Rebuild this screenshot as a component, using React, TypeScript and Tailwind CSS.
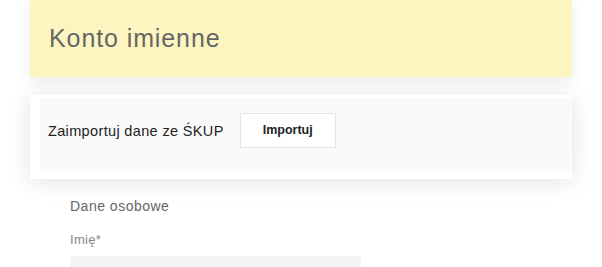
export default function App() {
  return (
    <div className="h-screen overflow-hidden bg-white font-['Liberation_Sans',Arial,sans-serif]">
      <div className="mx-[30px] flex h-[77px] items-center bg-[#fcf5c0] pl-[19px] shadow-[0_4px_14px_rgba(0,0,0,0.08)]">
        <h1 className="text-[25px] leading-none tracking-[0.9px] text-[#666]">Konto imienne</h1>
      </div>

      <div className="mx-[30px] mt-[18px] bg-white pb-[7px] pl-[10px] pt-[3px] shadow-[0_2px_22px_rgba(0,0,0,0.12)]">
        <div className="flex h-[74px] items-start gap-4 bg-[#fafafa] pl-2 pt-[15px]">
          <span className="mt-[8px] text-[14.5px] leading-5 tracking-[0.35px] text-[#222]">
            Zaimportuj dane ze ŚKUP
          </span>
          <button
            type="button"
            className="h-[35px] w-[96px] border border-[#e3e6ec] bg-white text-[12.5px] font-semibold text-[#222]"
          >
            Importuj
          </button>
        </div>
      </div>

      <section className="pl-[70px] pt-[17px]">
        <h2 className="text-[14px] leading-5 tracking-[0.5px] text-[#666]">Dane osobowe</h2>
        <label className="mt-[14px] block text-[13px] leading-5 tracking-[0.3px] text-[#888]">
          Imię*
        </label>
        <div className="mt-[6px] h-[36px] w-[291px] rounded-sm bg-[#f4f4f4]" />
      </section>
    </div>
  );
}
